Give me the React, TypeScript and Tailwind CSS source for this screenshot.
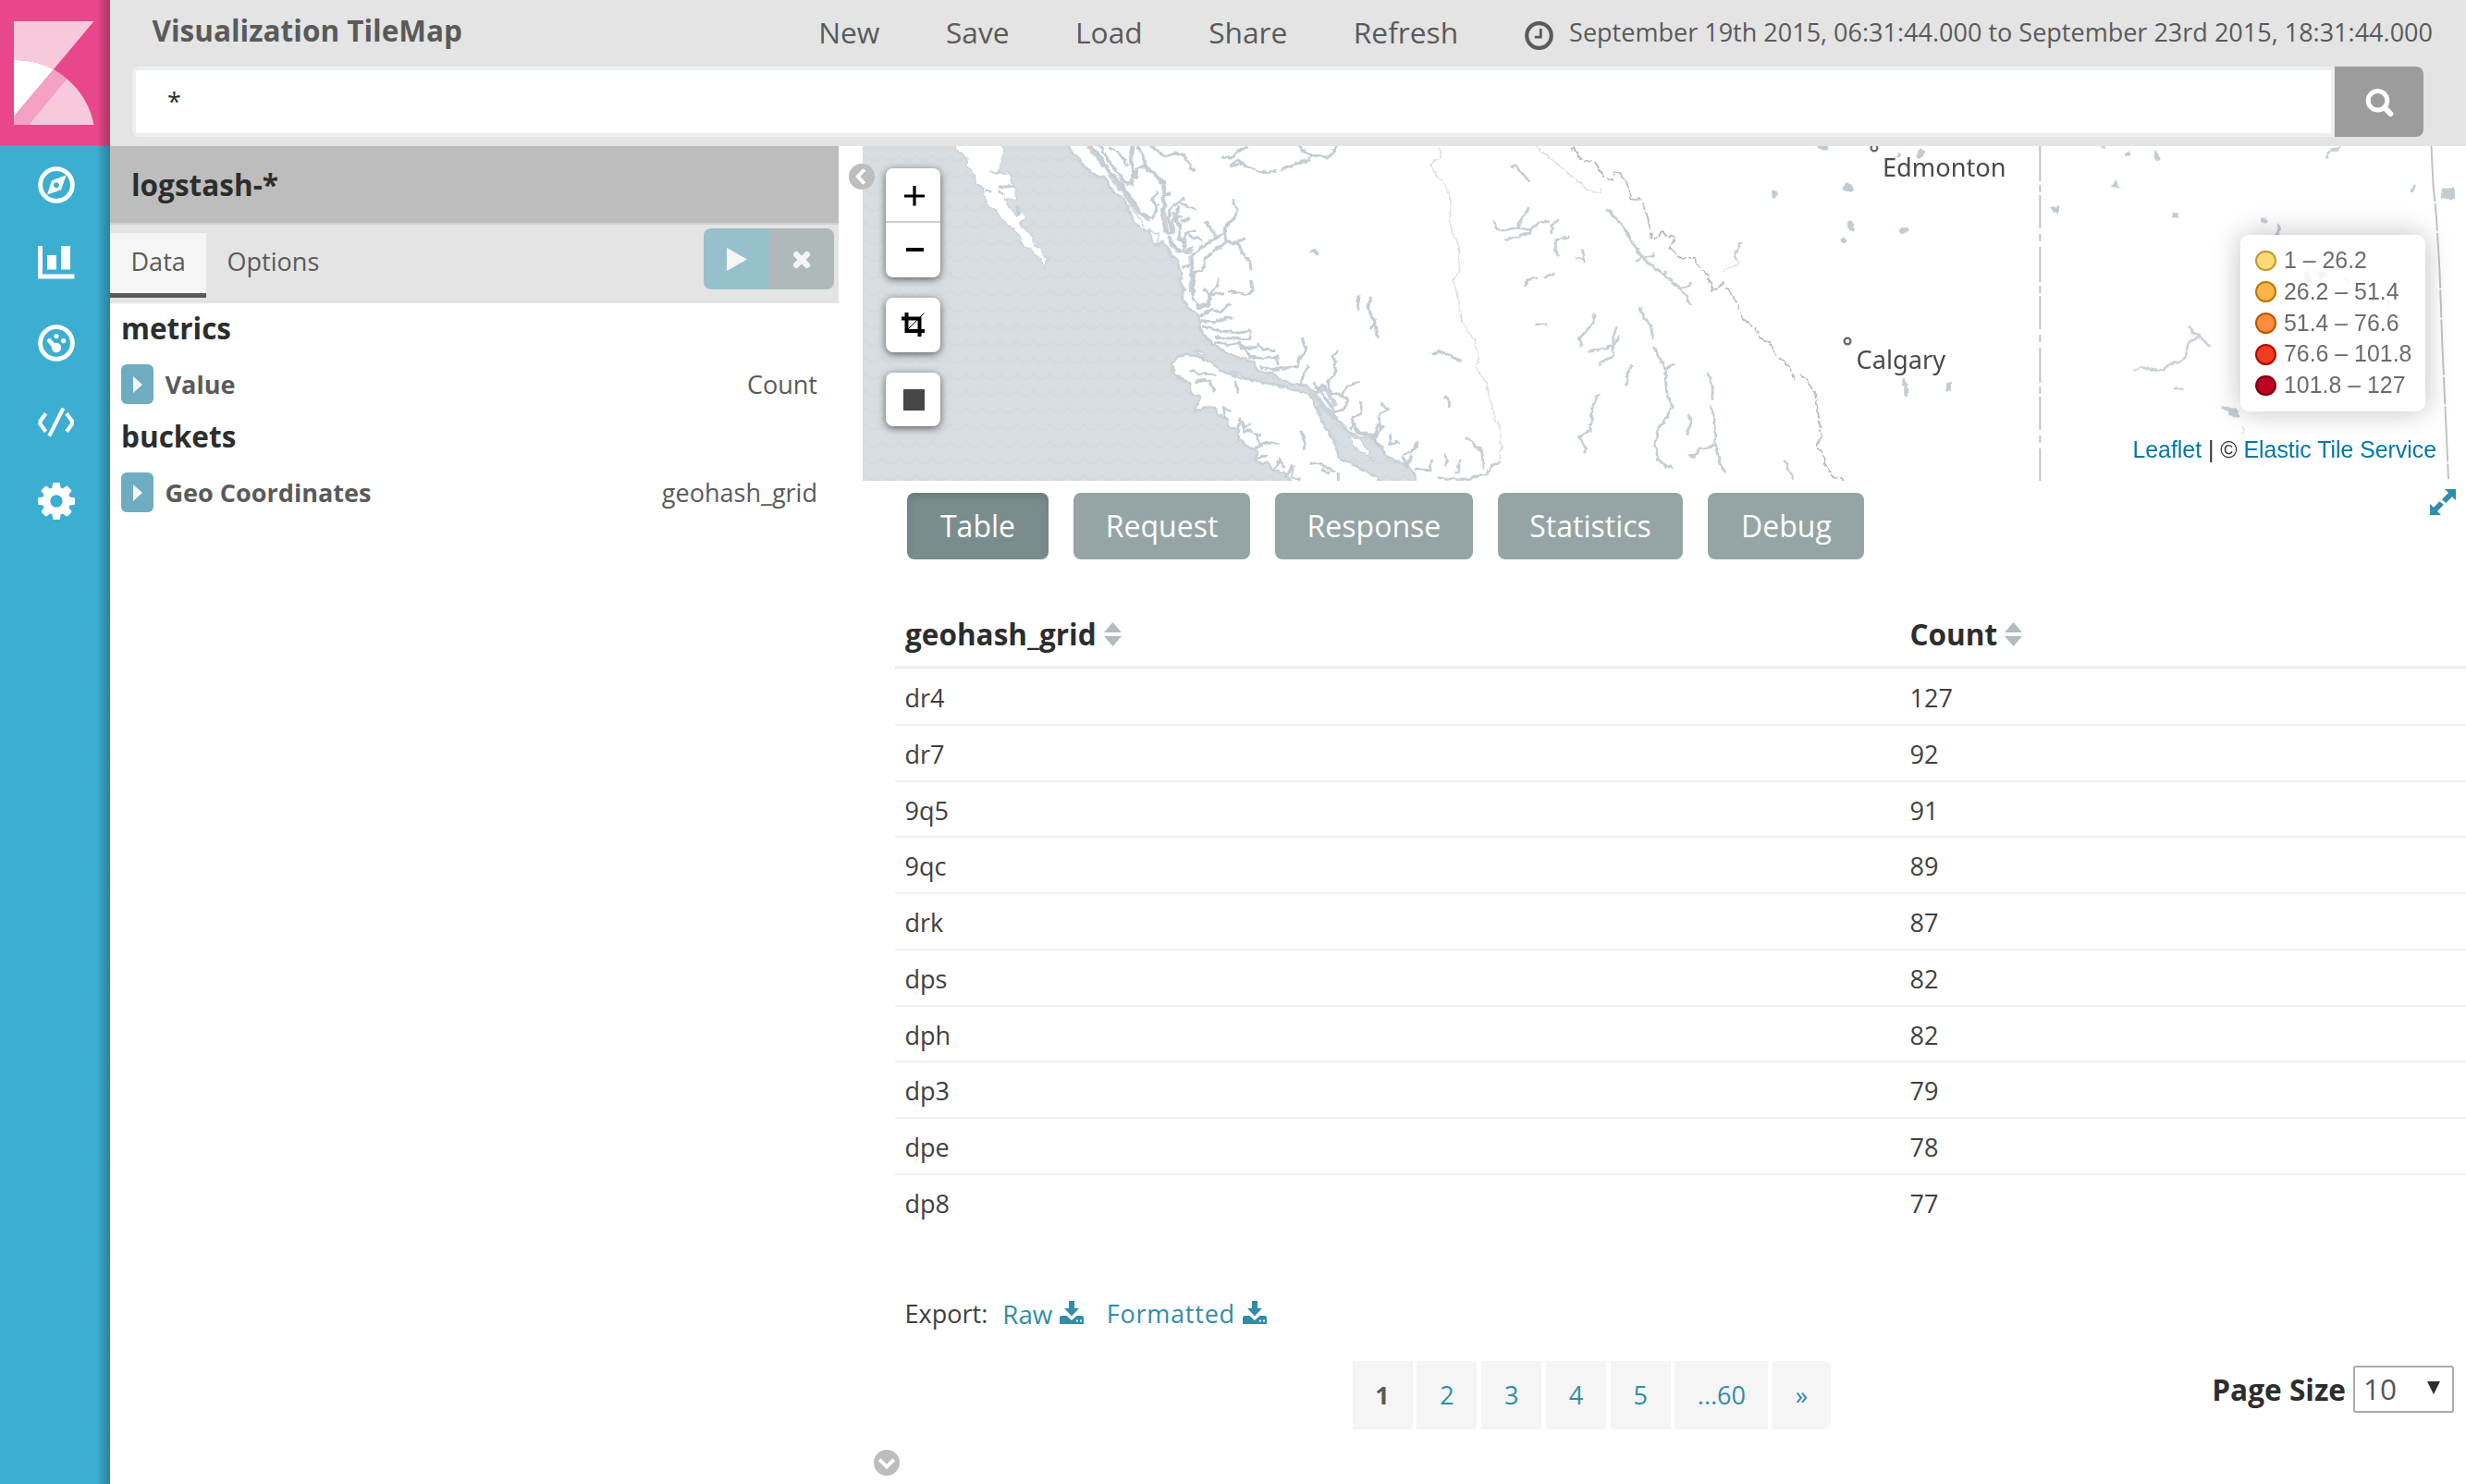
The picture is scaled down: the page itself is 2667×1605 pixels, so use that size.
import type { ReactNode } from "react";

const rows: [string, string][] = [
  ["dr4", "127"],
  ["dr7", "92"],
  ["9q5", "91"],
  ["9qc", "89"],
  ["drk", "87"],
  ["dps", "82"],
  ["dph", "82"],
  ["dp3", "79"],
  ["dpe", "78"],
  ["dp8", "77"],
];

const legend: [string, string][] = [
  ["1 – 26.2", "bg-[#fed976] border-[#bf9c36]"],
  ["26.2 – 51.4", "bg-[#feb24c] border-[#b67a05]"],
  ["51.4 – 76.6", "bg-[#fd8d3c] border-[#b85502]"],
  ["76.6 – 101.8", "bg-[#f03b20] border-[#ab0a02]"],
  ["101.8 – 127", "bg-[#bd0026] border-[#7c0008]"],
];

const GEAR =
  "M1024 640q0-106-75-181t-181-75-181 75-75 181 75 181 181 75 181-75 75-181zm512-109v222q0 12-8 23t-20 13l-185 28q-19 54-39 91 35 50 107 138 10 12 10 25t-9 23q-27 37-99 108t-94 71q-12 0-26-9l-138-108q-44 23-91 38-16 136-29 186-7 28-36 28h-222q-14 0-24.5-8.5t-11.5-21.5l-28-184q-49-16-90-37l-141 107q-10 9-25 9-14 0-25-11-126-114-165-168-7-10-7-23 0-12 8-23 15-21 51-66.5t54-70.5q-27-50-41-99l-183-27q-13-2-21-12.5t-8-23.5v-222q0-12 8-23t19-13l186-28q14-46 39-92-40-57-107-138-10-12-10-24 0-10 9-23 26-36 98.5-107.5t94.5-71.5q13 0 26 10l138 107q44-23 91-38 16-136 29-186 7-28 36-28h222q14 0 24.5 8.5t11.5 21.5l28 184q49 16 90 37l142-107q9-9 24-9 13 0 25 10 129 119 165 170 7 8 7 22 0 12-8 23-15 21-51 66.5t-54 70.5q26 50 41 98l183 28q13 2 21 12.5t8 23.5z";

function Logo() {
  return (
    <svg width="119" height="158" viewBox="0 0 119 158" className="block">
      <rect width="119" height="157.6" fill="#e8478b" />
      <path d="M15 23H101.5L58 75A87 87 0 0 0 15 65Z" fill="#f8c8dc" />
      <path d="M15 65A87 87 0 0 1 58 75L15 126Z" fill="#fff" />
      <path d="M58 75A87 87 0 0 1 72 85L31 135H15V126Z" fill="#f4a1c4" />
      <path d="M72 85A87 87 0 0 1 101.5 135H31Z" fill="#f8c8dc" />
    </svg>
  );
}

function Sidebar() {
  return (
    <aside className="relative w-[119px] shrink-0 bg-[#3caed2]">
      <Logo />
      <nav className="flex flex-col pl-[40.5px] pt-[22px] text-white">
        <svg width="40" height="40" viewBox="0 0 40 40">
          <circle cx="20" cy="20" r="17.4" fill="none" stroke="currentColor" strokeWidth="4.8" />
          <path fillRule="evenodd" fill="currentColor" d="M30.5 9.6L25.2 25.2L10 30.6L15 15.2ZM20 17.2a3 3 0 1 0 .01 0Z" />
        </svg>
        <svg width="40" height="36" viewBox="0 0 40 36" className="mt-[46px]" fill="currentColor">
          <path d="M0 0H5V30.5H39.5V35.5H0ZM10 10H20V25.5H10ZM25 0H35V25.5H25Z" />
        </svg>
        <svg width="40" height="40" viewBox="0 0 40 40" className="mt-[49px]">
          <circle cx="20" cy="20" r="17.4" fill="none" stroke="currentColor" strokeWidth="4.8" />
          <circle cx="20" cy="25" r="5.2" fill="currentColor" />
          <path d="M12.5 17.5L18 24" stroke="currentColor" strokeWidth="5" strokeLinecap="round" />
          <circle cx="20" cy="12.6" r="2.6" fill="currentColor" />
          <circle cx="27.6" cy="17.6" r="2.6" fill="currentColor" />
        </svg>
        <svg width="40" height="32" viewBox="0 0 40 32" className="mt-[50px]" fill="none" stroke="currentColor" strokeWidth="4.1">
          <path d="M8.5 6.2L2.5 14.5V17.5L8.5 25.8M31 6.2L37 14.5V17.5L31 25.8M27.4 .5L12.2 30.6" />
        </svg>
        <svg width="40" height="40" viewBox="0 -128 1536 1536" className="mt-[49px]" fill="currentColor">
          <path d={GEAR} />
        </svg>
      </nav>
      <div className="absolute inset-y-0 right-0 w-[14px] bg-linear-to-l from-black/25 via-black/15 to-transparent" />
    </aside>
  );
}

function Header() {
  return (
    <header className="h-[158px] bg-[#e4e4e4] text-[#5a5a5a]">
      <div className="flex h-[72px] items-start justify-between pl-[45.5px] pr-[36px]">
        <h1 className="mt-[10px] text-[31.5px] leading-[46px] font-bold">Visualization TileMap</h1>
        <div className="flex items-start gap-[71.5px] text-[31.7px] leading-[46px]">
          {["New", "Save", "Load", "Share", "Refresh"].map((t) => (
            <span key={t} className="mt-[12px]">{t}</span>
          ))}
          <span className="flex items-start gap-[17.5px] text-[27.02px]">
            <svg width="31" height="31" viewBox="0 0 31 31" className="mt-[23px]" fill="none" stroke="currentColor">
              <circle cx="15.5" cy="15.5" r="13.3" strokeWidth="4.2" />
              <path d="M17.3 8V17.2H10.8" strokeWidth="2.8" />
            </svg>
            <span className="mt-[12px]">September 19th 2015, 06:31:44.000 to September 23rd 2015, 18:31:44.000</span>
          </span>
        </div>
      </div>
      <div className="ml-[24px] mr-[46px] flex h-[76px]">
        <div className="flex-1 rounded-l-[7px] border-4 border-[#ecf0f1] bg-white pl-[34px] pt-[11px] text-[27px] leading-[46px] text-[#2d2d2d]">*</div>
        <div className="grid w-[96px] place-items-center rounded-r-[8px] bg-[#9c9c9c] text-white">
          <svg width="31" height="31" viewBox="0 0 31 31" fill="none" stroke="currentColor" className="mt-[2px]">
            <circle cx="13.5" cy="12.8" r="10.3" strokeWidth="5" />
            <path d="M21 20.5L27.3 27" strokeWidth="6" strokeLinecap="round" />
          </svg>
        </div>
      </div>
    </header>
  );
}

function AggRow({ name, value }: { name: string; value: string }) {
  return (
    <div className="flex h-[43px] items-center pr-[23px] leading-[40px]">
      <span className="grid h-[43px] w-[35px] place-items-center rounded-[6px] bg-[#6eadc1]">
        <svg width="10" height="18" viewBox="0 0 10 18" fill="#f5f5f5">
          <path d="M0 0L10 9L0 18Z" />
        </svg>
      </span>
      <span className="ml-[12.5px] mt-px font-bold">{name}</span>
      <span className="ml-auto mt-px">{value}</span>
    </div>
  );
}

function EditorPanel() {
  return (
    <section className="w-[788px] shrink-0 text-[27.05px] text-[#5a5a5a]">
      <div className="h-[85px] border-b-2 border-[#cfcfcf] bg-[#bdbdbd] pl-[23px] text-[31.5px] leading-[84px] font-bold text-[#2d2d2d]">logstash-*</div>
      <div className="flex h-[85px] items-start bg-[#e4e4e4]">
        <div className="mt-[9px] h-[70px] w-[104px] border-b-[5px] border-[#5a5a5a] bg-[#f5f5f5] pl-[22.5px] leading-[62px]">Data</div>
        <div className="ml-[22.5px] mt-[9px] leading-[62px]">Options</div>
        <div className="ml-auto mr-[5px] mt-[4px] flex h-[66px] w-[141px] overflow-hidden rounded-[8px] text-[#f5f5f5]">
          <div className="grid w-[71px] place-items-center bg-[#97c0cd]">
            <svg width="22" height="25" viewBox="0 0 22 25" fill="currentColor">
              <path d="M0 0L22 12.5L0 25Z" />
            </svg>
          </div>
          <div className="grid flex-1 place-items-center bg-[#b0b9ba]">
            <svg width="20" height="20" viewBox="0 0 22 22" fill="none" stroke="currentColor" strokeWidth="7" strokeLinecap="round" className="mt-[2px]">
              <path d="M4.6 4.6L17.4 17.4M17.4 4.6L4.6 17.4" />
            </svg>
          </div>
        </div>
      </div>
      <div className="pl-[12px]">
        <h2 className="mt-[7px] text-[31.5px] leading-[40px] font-bold text-[#2d2d2d]">metrics</h2>
        <div className="mt-[19px]"><AggRow name="Value" value="Count" /></div>
        <h2 className="mt-[15px] text-[31.5px] leading-[40px] font-bold text-[#2d2d2d]">buckets</h2>
        <div className="mt-[19px]"><AggRow name="Geo Coordinates" value="geohash_grid" /></div>
      </div>
    </section>
  );
}

const OCEAN =
  "M-300 -10H372L385 22L410 45L430 75L455 95L475 108L492 104L505 125L520 155L540 165L560 180L566 205L585 240L605 265L622 280L640 278L652 300L655 322L668 328L680 315L700 335L710 360L728 372L735 400L745 425L738 445L752 470L745 500L765 530L785 542L800 560L803 590L812 612L835 640L870 665L905 685L950 697L978 706L990 735L1040 742L1060 762L1110 780L1150 782L1180 815L1205 845L1235 875L1260 905L1290 935L1325 950L1365 950L1385 975L1410 1012L1450 1032L1485 1050L1500 1070L1506 1110H1395L1380 1082L1330 1055L1290 1035L1250 1015L1240 965L1215 925L1195 890L1180 850L1160 812L1110 798L1050 780L980 768L920 752L870 735L845 712L800 688L760 683L728 690L710 712L718 740L745 765L775 778L770 805L800 820L800 840L782 862L800 866L820 850L850 855L865 880L890 890L895 915L925 925L930 955L955 980L985 990L988 1030L1020 1035L1045 1062L1080 1065L1105 1110H-300Z";

const ISLANDS =
  "M5 -6L20 25L48 45L45 70L75 100L72 128L100 138L102 165L112 192L140 215L158 240L185 265L215 295L222 318L250 338L272 362L290 372L296 405L304 378L312 380L288 350L292 335L268 335L262 298L240 280L218 258L240 235L225 218L210 235L195 215L180 198L170 175L205 182L208 148L190 118L185 92L160 95L120 92L150 88L162 50L165 -6ZM1288 945L1320 960L1355 1000L1345 1008L1305 985ZM570 195L600 230L625 275L612 272L590 250ZM505 100L530 112L560 155L540 145ZM900 740L940 738L935 745ZM778 668L820 678L810 684ZM1350 1015L1372 1020L1365 1026ZM640 285L670 292L665 325L652 318Z";

// Inlets, fjords and channels along the mainland and the large island.
const FJORDS =
  "M450 6L480 40L500 80L530 110L560 150L590 190L620 235L650 240L665 200L648 180L665 155M480 6L510 60L540 95L555 125L585 130L590 95L580 60L585 6M510 6L545 35L570 70M600 6L620 40L625 70L600 80L595 115M625 70L665 105L685 125L690 165L680 230L690 280L712 290L700 240L712 200L735 190L755 172M645 6L690 42L720 30L755 38L765 65L785 88M690 165L712 160M735 190L790 213M735 200L725 240L740 270L735 305L760 330L755 290L790 280M740 250L770 240M755 290L810 312M820 250L838 275L858 298M910 183L928 215L910 245L882 270L888 318L850 345L820 370L812 410L785 415L782 470L775 420L780 360L800 340L848 308L882 290M888 318L925 318L952 304M925 318L940 350L965 380L970 408M970 440L976 478L960 488L895 478M862 435L858 465L840 480L835 520L800 530L780 500L785 440M835 490L880 482M815 470L835 490M800 560L840 535L870 545L905 515M805 575L850 578L880 565L908 562M810 590L855 603L930 612L972 605M850 625L900 630L965 632L970 605M850 640L890 650L930 645L965 685M930 660L985 660L990 645L1010 668L1045 668M960 690L1010 695L1060 690M1000 725L1050 730L1120 720L1128 690L1148 668L1135 630M1050 690L1060 720M1130 780L1140 745L1158 718M1215 775L1245 740L1235 690L1255 670M1215 775L1230 810L1265 815L1280 785L1320 772M1170 770L1190 800L1215 830L1240 870L1270 860L1285 830L1265 815M1180 810L1200 780L1215 800M1295 925L1300 885L1325 875L1328 835M1300 895L1315 935L1370 945L1380 910L1400 920M1380 880L1415 862L1390 842M1380 880L1390 925L1365 955L1395 985M1418 940L1420 975L1448 965M1460 1010L1490 1000L1508 965M1460 1010L1475 1045L1490 1010M1500 1055L1548 1058L1556 1022M700 300L720 330L735 345M715 240L745 235M720 345L760 350L780 330M745 400L775 390M770 735L805 745L855 745M790 770L835 765L850 805M915 765L930 810M1130 930L1145 965L1140 992M1160 1035L1200 1040L1240 1062M1195 1055L1225 1068M1252 1065V1092M985 985L1010 970L1060 970M1000 975L980 940L1005 945M925 925L935 890L945 920L968 905M885 890L880 850L905 870M940 930L975 930M990 1020L1020 1010M1045 1060L1060 1020L1075 1050M1080 1085L1105 1040L1100 1080L1130 1088M150 140L205 135M165 165L150 150M105 150L130 155M210 200L215 235M870 42L905 45L925 22L960 8M905 72L925 50L960 75L1010 92L1050 88M900 72L950 60M1065 82L1110 65L1150 55L1110 60M1120 6L1165 35L1220 42L1250 8M1150 55L1165 35M1320 490L1314 540M1358 498L1348 530L1370 575L1378 630M1370 580L1355 600";

// Wider sounds where the channels open up toward the sea.
const SOUNDS =
  "M585 6L580 60L590 95L578 128M625 70L665 105L685 130L688 230L695 285M440 6L500 75L560 160L600 215L640 245M775 360L778 420L772 480M700 300L715 330L740 350M720 220L712 290M1165 800L1200 850L1240 890M1175 790L1215 800L1245 850M745 300L755 345L780 350M530 110L560 150M840 480L830 520L800 525";

// Interior lakes and rivers, west to east.
const LAKES =
  "M352 92L362 86L402 138M402 226L382 255L368 290M304 268L308 292L328 298L368 288L408 297L430 272L462 268M332 326L370 320L408 303M486 262L466 280L464 308M516 318L480 328L474 345L482 382M552 358L560 402M534 386L556 392M392 480L394 458L426 452M444 450L474 436M128 700L148 688L170 698L208 722M160 836L176 852V874M222 968L250 995L270 1020L272 1070M162 1020L172 1045L162 1062M208 1038L200 1062L204 1080L192 1086M144 1100L230 1108L245 1095L280 1092L300 1060L320 1052M420 602H452M586 566L582 600L544 648L550 676M568 692L630 676L650 660L658 636M650 606L640 640V706L602 724L604 736M692 734L680 760L678 802M598 828L580 870L578 920L572 948L544 968L560 1000L562 1024M718 546L716 565L746 605L752 652M752 676L786 740L790 820L806 868L788 910L766 940L758 990L766 1040L788 1064H806M812 728L790 748M906 762L920 800V848M918 866L926 930L928 990L940 1050L956 1084M924 994L880 1010L868 1030H852M850 890L860 920L848 962M622 228L660 275L690 325L718 384L780 438L824 482L846 510L856 538H862M696 340L722 386L754 382V370M702 396L722 384M790 430L776 440M820 490L862 470M1000 336L984 372L990 400M1122 1040L1138 1080L1150 1106M1460 774L1468 810V840";

const FAINT =
  "M148 28L154 62L136 70L122 84L140 120L166 150L182 210L176 260L186 310L204 345V430L188 460L202 520L212 590L228 625L250 655L260 715L250 740L282 795L284 830L300 870L304 910L318 940L324 1000L318 1055M420 24L480 80L530 130L580 174H600L608 162M948 430L966 416L990 412L994 400";

const PROVINCE =
  "M520 36L528 28L548 70L590 76L610 122L638 134L642 106L660 112L680 150L692 194L716 196L736 250L750 326L770 318L776 298L790 314L818 322L798 356L830 386H868L872 402L910 445L920 492L938 486L950 468L966 494L990 530L1004 584L1040 615L1056 646L1085 665L1100 705L1136 738L1152 782M1168 768L1184 778L1210 826L1220 900L1228 966L1214 1004L1232 1016L1236 1052L1262 1098L1292 1108";

const PLAINS =
  "M770 604L778 628L800 642L826 674M800 642L766 660L758 706L744 724L718 730L682 754L630 742L608 750M985 630L990 662M1018 716L1042 726M1162 64L1172 44L1205 26";

const PLAINS_FAINT = "M922 930L926 966L908 990M940 1040L964 1044L978 1062L988 1050";

const ALBERTA_LAKES: [number, number, number, number, number][] = [
  [1232, 28, 20, 8, 20],
  [1446, 50, 7, 8, 0],
  [1508, 48, 10, 16, 20],
  [1304, 160, 14, 15, 50],
  [1094, 180, 6, 14, 0],
  [1312, 284, 9, 18, -20],
  [1462, 298, 15, 10, -20],
  [1292, 330, 11, 9, 40],
];

function MapTiles() {
  return (
    <svg width="1734" height="362" viewBox="933 158 1734 362" className="block">
      <defs>
        <pattern id="waves" width="18.2" height="18.2" patternUnits="userSpaceOnUse" x="1027" y="158">
          <rect width="18.2" height="18.2" fill="#d8dde1" />
          <path d="M0 9Q3 15.5 9 15.5T18.2 9" fill="none" stroke="#d3d9dd" strokeWidth="2" />
        </pattern>
        <filter id="rough" x="-5%" y="-5%" width="110%" height="110%" colorInterpolationFilters="sRGB">
          <feTurbulence type="fractalNoise" baseFrequency="0.16" numOctaves="2" seed="4" />
          <feDisplacementMap in="SourceGraphic" scale="5" xChannelSelector="R" yChannelSelector="G" />
        </filter>
        <clipPath id="view">
          <rect x="933" y="158" width="1734" height="362" />
        </clipPath>
        <clipPath id="coastClip">
          <path d={OCEAN} transform="translate(1030 156) scale(.33333)" />
        </clipPath>
      </defs>
      <g clipPath="url(#view)">
        <g clipPath="url(#coastClip)">
          <rect x="933" y="158" width="620" height="362" fill="url(#waves)" />
        </g>
        <g filter="url(#rough)" fill="none" strokeLinejoin="round">
          <g transform="translate(1030 156) scale(.33333)">
            <path d={OCEAN} stroke="#c9d1d7" strokeWidth="8" />
            <path d={ISLANDS} fill="#fff" stroke="#cad2d8" strokeWidth="4" />
            <path d={SOUNDS} stroke="#cbd2d8" strokeWidth="14" />
            <path d={FJORDS} stroke="#c4ccd4" strokeWidth="8.5" />
            <path d="M1160 350L1180 342L1190 360L1175 356Z" fill="#c3cbd2" stroke="#c3cbd2" strokeWidth="4" />
          </g>
          <g transform="translate(1500 150) scale(.38265 .33333)">
            <path d={LAKES} stroke="#c6ced5" strokeWidth="7.5" />
            <path d={FAINT} stroke="#dcdfe2" strokeWidth="4" />
            <path d={PROVINCE} stroke="#b8b8b8" strokeWidth="4.5" strokeDasharray="60 6 24 6" />
            <g fill="#c3cbd2">
              {ALBERTA_LAKES.map(([x, y, rx, ry, a]) => (
                <ellipse key={x} cx={x} cy={y} rx={rx} ry={ry} transform={`rotate(${a} ${x} ${y})`} />
              ))}
            </g>
          </g>
          <g transform="translate(2080 150) scale(.37436 .33333)">
            <path d={PLAINS} stroke="#c6ced5" strokeWidth="7" />
            <path d={PLAINS_FAINT} stroke="#e2e4e6" strokeWidth="5" />
            <g fill="#c3cbd2">
              <path d="M582 44h18v14h-16zM664 40l10 -4l10 30l-14 4zM556 130l12 30l-24 -4zM366 220h24v22h-16zM720 238h16v18h-16zM978 260h14v12h-14zM1022 272l12 20l-8 22l-10 -2l8 -18zM1412 152l10 -4l-6 26h-6zM1502 158h34v38h-40zM1096 468l12 -46l20 44zM1134 432l22 -6l14 14l-24 18zM1212 454l20 6v10zM1334 518l16 10l-6 16zM68 792l12 -6v32l-16 -2zM726 806l26 6v6l-26 -4zM862 870l42 0l12 36l-26 -4zM515 24h14v8h-10z" />
            </g>
          </g>
        </g>
        <g fill="none" stroke="#c0c0c0" strokeWidth="1.9">
          <path d="M2206.3 158V520" strokeDasharray="38 4 8 3 36 6 8 6" />
          <path d="M2629.5 158L2631.5 200L2635 235L2638.5 293L2641.5 376L2645.5 462L2648 518" strokeDasharray="60 2 30 2" />
        </g>
        <g fill="#fff" stroke="#666" strokeWidth="2.2">
          <circle cx="2027" cy="160" r="3.4" />
          <circle cx="1998" cy="369" r="3.4" />
        </g>
        <g fill="#4a4a4a" fontFamily="'Noto Sans', sans-serif" fontSize="27.2">
          <text x="2036" y="191">Edmonton</text>
          <text x="2007.5" y="398.5">Calgary</text>
        </g>
      </g>
    </svg>
  );
}

function MapButton({ children }: { children: ReactNode }) {
  return <div className="grid h-[58.5px] w-[59px] place-items-center rounded-[8px] bg-white shadow-[0_2px_9px_rgba(0,0,0,0.6)]">{children}</div>;
}

function MapView() {
  return (
    <div className="relative ml-[26px] h-[362px]">
      <MapTiles />
      <svg width="28" height="28" viewBox="0 0 28 28" className="absolute left-[-15.5px] top-[19px]">
        <circle cx="14" cy="14" r="14" fill="#bdbdbd" />
        <path d="M16.8 6.5L9.8 14L16.8 21.5" fill="none" stroke="#fff" strokeWidth="4" />
      </svg>
      <div className="absolute left-[25px] top-[24px] flex flex-col gap-[22px]">
        <div className="h-[118px] w-[59px] rounded-[8px] bg-white shadow-[0_2px_9px_rgba(0,0,0,0.6)]">
          <div className="grid h-[59px] place-items-center border-b-2 border-[#ccc]">
            <svg width="22" height="22" viewBox="0 0 22 22" className="ml-[3px] mt-[3px]" stroke="#000" strokeWidth="3.2">
              <path d="M11 0V21.5M0 11H22" />
            </svg>
          </div>
          <div className="grid h-[58px] place-items-center">
            <div className="ml-[3px] h-[3.5px] w-[19px] bg-black" />
          </div>
        </div>
        <MapButton>
          <svg width="25" height="26" viewBox="0 0 25 26" fill="none" stroke="#000" strokeWidth="4" className="mb-[1px]">
            <path d="M0 6.5H19.5V26M5.5 0V20H25" />
            <path d="M24.5 .5L5 20" strokeWidth="1" />
          </svg>
        </MapButton>
        <MapButton>
          <div className="mt-px ml-[2px] h-[23px] w-[23px] bg-[#464646]" />
        </MapButton>
      </div>
      <div className="absolute left-[1490px] top-[96px] h-[191px] w-[200px] rounded-[10px] bg-white/80 pl-[16px] pt-[11px] font-['Liberation_Sans',sans-serif] text-[24.9px] leading-[33.8px] text-[#6b6b6b] shadow-[0_0_30px_rgba(0,0,0,0.25)]">
        {legend.map(([label, cls]) => (
          <div key={label} className="flex items-center gap-[8.5px] whitespace-nowrap">
            <i className={`h-[22.5px] w-[22.5px] shrink-0 rounded-full border-2 ${cls}`} />
            {label}
          </div>
        ))}
      </div>
      <div className="absolute right-[32px] bottom-[15px] bg-white/70 font-['Liberation_Sans',sans-serif] text-[24.85px] leading-[36px] whitespace-nowrap text-[#333]">
        <span className="text-[#0078a8]">Leaflet</span> | © <span className="text-[#0078a8]">Elastic Tile Service</span>
      </div>
    </div>
  );
}

function SortIcon() {
  return (
    <svg width="19" height="26" viewBox="0 0 19 26" fill="#b4bbbf" className="mt-px ml-[8px]">
      <path d="M9.5 0L19 11H0ZM0 15H19L9.5 26Z" />
    </svg>
  );
}

function DownloadIcon() {
  return (
    <svg width="26" height="25" viewBox="0 0 26 25" fill="currentColor" className="mb-[3px] ml-[8px]">
      <path d="M10 0H16V8H21L13 16.5L5 8H10Z" />
      <path fillRule="evenodd" d="M1.5 16H7.5L13 21L18.5 16H24.5L26 17.5V25H0V17.5ZM18 20.5V22.5H20V20.5ZM22 20.5V22.5H24V20.5Z" />
    </svg>
  );
}

const tabs: [string, string][] = [
  ["Table", "w-[153px] bg-[#798d8f] shadow-[inset_0_5px_9px_rgba(0,0,0,0.125)]"],
  ["Request", "w-[191px] bg-[#95a5a6]"],
  ["Response", "w-[213.5px] bg-[#95a5a6]"],
  ["Statistics", "w-[200.5px] bg-[#95a5a6]"],
  ["Debug", "w-[169px] bg-[#95a5a6]"],
];

function SpyPanel() {
  const pages = ["1", "2", "3", "4", "5", "...60", "»"];
  return (
    <div className="relative flex flex-col pl-[61px] text-[27.05px] text-[#2d2d2d]">
      <svg width="28" height="28" viewBox="0 0 28 28" fill="#328caa" className="absolute top-[9px] right-[11px]">
        <path d="M16 0H28V12L24 8.2L17 15L13 11L20 4Z" />
        <path d="M12 28H0V16L4 19.8L10.5 13.2L14.8 17L8 24Z" />
      </svg>
      <div className="mt-[13px] ml-[13px] flex gap-[27.1px]">
        {tabs.map(([t, cls]) => (
          <div key={t} className={`h-[72px] rounded-[8px] text-center text-[32px] leading-[72px] text-white ${cls}`}>{t}</div>
        ))}
      </div>
      <div className="mt-[45px] flex h-[74px] border-b-4 border-[#ecf0f0] text-[31.5px] leading-[72px] font-bold">
        <div className="flex w-[1087px] items-center pl-[11px]"><span className="mt-px">geohash_grid</span><SortIcon /></div>
        <div className="flex items-center pl-[10.5px]"><span className="mt-px">Count</span><SortIcon /></div>
      </div>
      <div className="h-[607px] text-[#404040]">
        {rows.map(([k, v]) => (
          <div key={k} className="flex h-[60.75px] border-b-[2.6px] border-[#ecf0f2] pt-[2px] leading-[58.6px] last:border-b-0">
            <div className="w-[1087px] pl-[10.5px]">{k}</div>
            <div className="pl-[10.5px]">{v}</div>
          </div>
        ))}
      </div>
      <div className="mt-[70px] flex h-[40px] items-center pl-[10.5px] leading-[40px] text-[#404040]">
        <span>Export:</span>
        <span className="ml-[16px] flex items-center text-[27.7px] text-[#328caa]">Raw<DownloadIcon /></span>
        <span className="ml-[24.5px] flex items-center text-[#328caa]">
          <span className="tracking-[0.75px]">Formatted</span><DownloadIcon />
        </span>
      </div>
      <div className="mt-[31px] flex items-start">
        <div className="ml-[494.5px] flex gap-[4.6px]">
          {pages.map((p, i) => (
            <div
              key={p}
              className={`h-[74px] bg-[#f5f5f5] text-center leading-[73px] ${i === 5 ? "w-[101px]" : i === 6 ? "w-[63px] rounded-r-[8px]" : "w-[65.2px]"} ${i === 0 ? "font-bold text-[#5a5a5a]" : "text-[#328caa]"}`}
            >
              {p}
            </div>
          ))}
        </div>
        <div className="mt-[5px] mr-[13px] ml-auto flex text-[31.6px] leading-[50px]">
          <span className="mt-px font-bold">Page Size</span>
          <div className="ml-[8px] flex h-[51px] w-[109px] items-center justify-between rounded-[3px] border-2 border-[#a9a9a9] pr-[13px] pb-px pl-[9px] text-[#555]">
            10
            <svg width="14" height="14" viewBox="0 0 14 14" fill="#2d2d2d" className="mb-[3px]">
              <path d="M0 0H14L7 14Z" />
            </svg>
          </div>
        </div>
      </div>
      <svg width="28" height="28" viewBox="0 0 28 28" className="mt-[22px] ml-[-23.5px]">
        <circle cx="14" cy="14" r="14" fill="#bdbdbd" />
        <path d="M6.3 10.7L14 18.3L21.7 10.7" fill="none" stroke="#fff" strokeWidth="4" />
      </svg>
    </div>
  );
}

export default function App() {
  return (
    <div className="flex h-[1605px] w-[2667px] overflow-hidden bg-white font-['Open_Sans',sans-serif] [font-variant-ligatures:none]">
      <Sidebar />
      <div className="flex min-w-0 flex-1 flex-col">
        <Header />
        <div className="flex flex-1">
          <EditorPanel />
          <main className="min-w-0 flex-1">
            <MapView />
            <SpyPanel />
          </main>
        </div>
      </div>
    </div>
  );
}
